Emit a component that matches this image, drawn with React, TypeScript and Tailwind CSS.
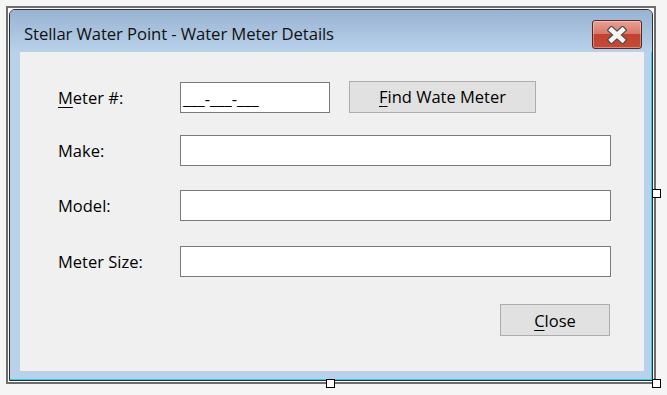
import React from "react";

const font = "font-['Open_Sans','Noto_Sans',sans-serif]";

type Field = {
  label: string;
  top: string;
};

const fields: Field[] = [
  { label: "Make:", top: "mt-[22px]" },
  { label: "Model:", top: "mt-[24px]" },
  { label: "Meter Size:", top: "mt-[25px]" },
];

// white cross used on the caption close button
function CloseGlyph() {
  return (
    <svg width="20" height="18" viewBox="0 0 20 18">
      <g strokeLinecap="square">
        <path d="M4.5 4 L15.5 14 M15.5 4 L4.5 14" stroke="#4d4d4d" strokeWidth="7" />
        <path d="M4.5 4 L15.5 14 M15.5 4 L4.5 14" stroke="#f4f4f4" strokeWidth="4.6" />
      </g>
    </svg>
  );
}

function Handle({ className }: { className: string }) {
  return <div className={`absolute w-[9px] h-[9px] bg-white border border-black ${className}`}></div>;
}

export default function App() {
  return (
    <div className={`relative w-[667px] h-[395px] bg-[#f5f5f5] pt-[6px] pl-[6px] ${font}`}>
      {/* designer selection frame */}
      <div className="w-[650px] h-[378px] border-2 border-[#6d6d6d] bg-[#fafafa] p-px">
        <div className="flex h-full w-full flex-col rounded-t-[6px] border border-[#2e2e2e] bg-[#b9d1ea]">
          {/* caption */}
          <div className="flex h-[42px] items-start justify-between rounded-t-[5px] bg-gradient-to-b from-[#98b3d2] to-[#b9d1ea] pl-[14px] pr-[10px]">
            <span className="mt-[14px] text-[16.7px] leading-[20px] tracking-[-0.1px] text-[#111]">
              Stellar Water Point - Water Meter Details
            </span>
            <button className="mt-[10px] flex h-[29px] w-[50px] items-center justify-center rounded-[3px] border border-[#5a2521] bg-[linear-gradient(to_bottom,#e7a194_0%,#d9776a_48%,#c1432f_50%,#c54b37_100%)] shadow-[inset_0_0_0_1px_rgba(255,255,255,0.35)]">
              <CloseGlyph />
            </button>
          </div>

          {/* client area */}
          <div className="flex flex-1 flex-col pl-[10px] pr-[7px] border-r border-[#25d0e8]">
            <div className="flex flex-1 flex-col bg-[#f0f0f0] pl-[38px] text-[16.5px] text-black">
              <div className="mt-[29px] flex h-[32px] items-center">
                <span className="w-[122px] pt-[2px]">
                  <span className="underline underline-offset-[3px]">M</span>eter #:
                </span>
                <div className="flex h-[31px] w-[150px] items-end border border-[#7a7a7a] bg-white px-[2px] pb-[4px] text-[16.5px] leading-none">
                  ___-___-___
                </div>
                <button className="ml-[19px] h-[32px] w-[187px] border border-[#adadad] bg-[#e1e1e1] pt-[1px]">
                  <span className="underline underline-offset-[3px]">F</span>ind Wate Meter
                </button>
              </div>

              {fields.map((f) => (
                <div key={f.label} className={`${f.top} flex h-[31px] items-center`}>
                  <span className="w-[122px] pt-[2px]">{f.label}</span>
                  <div className="h-[31px] w-[431px] border border-[#7a7a7a] bg-white"></div>
                </div>
              ))}

              <div className="mt-[27px] flex w-[552px] justify-end">
                <button className="h-[32px] w-[110px] border border-[#adadad] bg-[#e1e1e1] pt-[2px]">
                  <span className="underline underline-offset-[3px]">C</span>lose
                </button>
              </div>
            </div>
          </div>

          {/* bottom frame */}
          <div className="h-[9px] border-b border-r border-[#25d0e8] bg-[#b9d1ea]"></div>
        </div>
      </div>

      <Handle className="left-[326px] top-[379px]" />
      <Handle className="left-[652px] top-[379px]" />
      <Handle className="left-[652px] top-[189px]" />
    </div>
  );
}
